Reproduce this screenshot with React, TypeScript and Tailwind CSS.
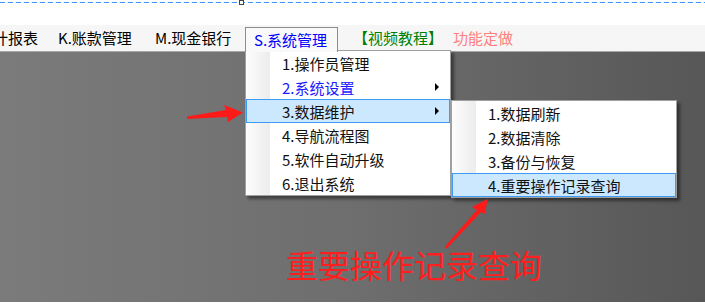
import React from "react";

const font = { fontFamily: '"Noto Sans CJK SC", "Noto Sans", sans-serif' };

interface Item {
  label: string;
  sub?: boolean;
  active?: boolean;
  blue?: boolean;
}

const mainItems: Item[] = [
  { label: "1.操作员管理" },
  { label: "2.系统设置", sub: true, blue: true },
  { label: "3.数据维护", sub: true, active: true },
  { label: "4.导航流程图" },
  { label: "5.软件自动升级" },
  { label: "6.退出系统" },
];

const subItems: Item[] = [
  { label: "1.数据刷新" },
  { label: "2.数据清除" },
  { label: "3.备份与恢复" },
  { label: "4.重要操作记录查询", active: true },
];

function MenuRow({ item }: { item: Item }) {
  return (
    <div
      className={`relative flex h-[24px] items-center pl-[35px] text-[15px] ${
        item.active ? "border border-[#3d9bf5] bg-[#cce8ff]" : "border border-transparent"
      } ${item.blue ? "text-[#1a1aff]" : "text-[#111]"}`}
    >
      <span className="leading-none">{item.label}</span>
      {item.sub && (
        <span className="absolute right-[10px] top-1/2 -translate-y-1/2 h-0 w-0 border-y-[4px] border-l-[4px] border-y-transparent border-l-black" />
      )}
    </div>
  );
}

function Menu({ items, className }: { items: Item[]; className: string }) {
  return (
    <div className={`absolute border border-[#a0a0a0] bg-white shadow-[3px_3px_3px_rgba(0,0,0,0.45)] ${className}`}>
      <div className="absolute left-0 top-0 bottom-0 w-[24px] bg-gradient-to-r from-[#fdfdfd] to-[#ececec]" />
      <div className="relative flex flex-col">
        {items.map(it => (
          <MenuRow key={it.label} item={it} />
        ))}
      </div>
    </div>
  );
}

export default function App() {
  return (
    <div className="relative h-[303px] w-[705px] overflow-hidden bg-white" style={font}>
      {/* designer guide line */}
      <div className="relative h-[25px] bg-white">
        <div className="absolute left-0 right-0 top-[2px] h-[1px] bg-[repeating-linear-gradient(90deg,#3399ff_0_5px,transparent_5px_8px)]" />
        <div className="absolute left-[239px] top-[0px] h-[5px] w-[5px] border border-[#444] bg-white" />
      </div>

      {/* menubar */}
      <div className="flex h-[27px] items-center border-b border-[#a6a6a6] bg-[#f6f6f6] text-[15px] text-black">
        <div className="ml-[-7px] w-[65px] shrink-0">计报表</div>
        <div className="w-[97px] shrink-0">K.账款管理</div>
        <div className="w-[90px] shrink-0">M.现金银行</div>
        <div className="relative z-10 mt-[2px] flex h-[25px] w-[93px] shrink-0 items-center self-start border border-b-0 border-[#8c8c8c] bg-[#f9f9f9] pl-[8px] text-[#0000ff]">
          S.系统管理
        </div>
        <div className="w-[115px] shrink-0 pl-[15px] text-[#008000]">【视频教程】</div>
        <div className="shrink-0 text-[#ff7f7f]">功能定做</div>
      </div>

      {/* workspace */}
      <div className="h-[250px] bg-gradient-to-r from-[#7b7b7b] via-[#6e6e6e] to-[#575757]" />

      <Menu items={mainItems} className="left-[245px] top-[50px] w-[206px]" />
      <Menu items={subItems} className="left-[451px] top-[100px] w-[226px]" />

      {/* annotation */}
      <div className="absolute left-[286px] top-[248px] text-[32px] leading-none text-[#ff1f1f]">重要操作记录查询</div>

      <svg className="pointer-events-none absolute left-0 top-0" width="705" height="303">
        <polygon
          fill="#ff1a1a"
          points="187,116.5 226,110 224,105 243,112.5 228,122 227,117 187,119"
        />
        <polygon
          fill="#ff1a1a"
          points="444.5,247 447,248.5 481,212 485,214 487.5,199 472,207 477,210"
        />
      </svg>
    </div>
  );
}
